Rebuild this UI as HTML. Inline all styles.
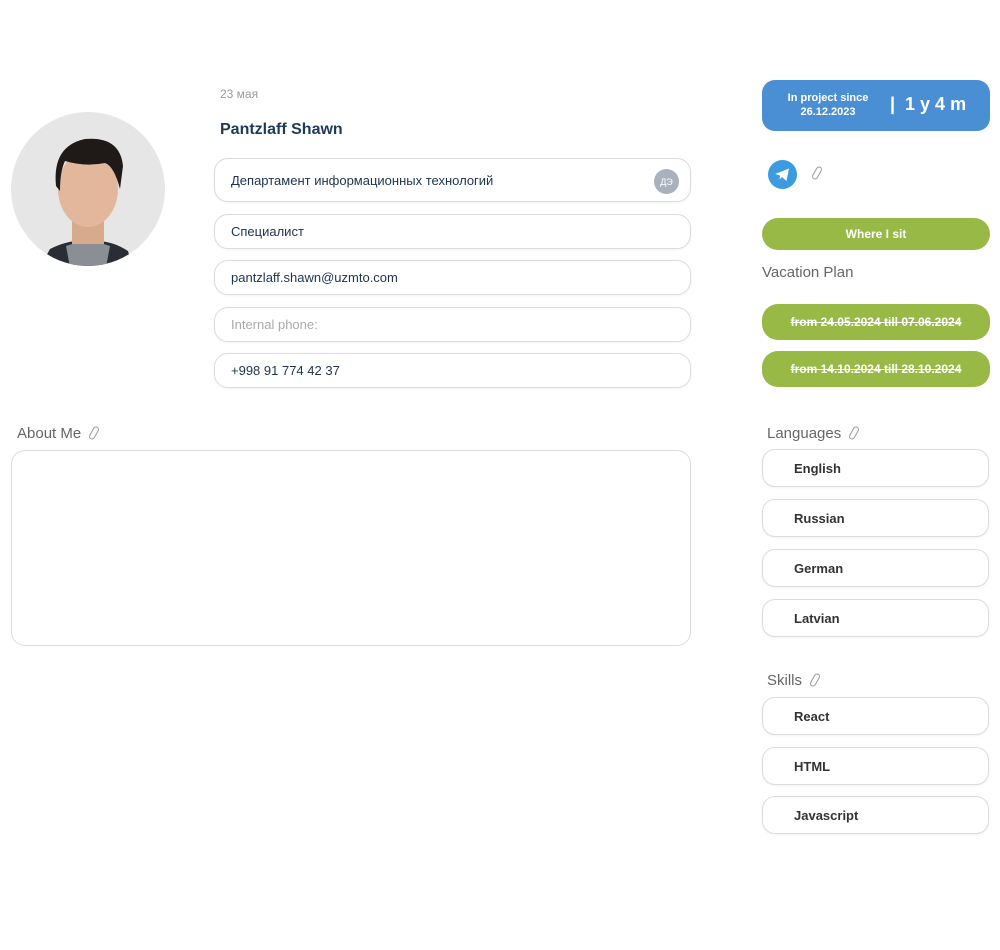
<!DOCTYPE html>
<html><head><meta charset="utf-8"><style>
*{box-sizing:border-box;margin:0;padding:0}
body{width:1000px;height:950px;background:#fff;position:relative;font-family:"Liberation Sans","Noto Sans CJK SC",sans-serif;overflow:hidden}
.a{position:absolute}
.f{position:absolute;left:214px;width:477px;border:1px solid #dcdcdc;border-radius:14px;font-size:13px;color:#1d3350;padding-left:16px;display:flex;align-items:center;box-shadow:0 1px 2px rgba(0,0,0,.05)}
.r{position:absolute;left:762px;width:227px;border:1px solid #dcdcdc;border-radius:13px;font-size:13px;font-weight:bold;color:#333;padding-left:31px;display:flex;align-items:center;height:38px;box-shadow:0 1px 2px rgba(0,0,0,.05)}
.g{position:absolute;left:762px;width:228px;background:#98b946;border-radius:16px;color:#fff;font-size:12px;font-weight:bold;display:flex;align-items:center;justify-content:center}
.lbl{position:absolute;font-size:15px;color:#666}
.pen{display:inline-block;width:6px;height:14px;border:1px solid #999;border-radius:3px;transform:rotate(30deg);margin-left:10px;vertical-align:-2px}
</style></head><body>
<svg class="a" style="left:10px;top:111px" width="156" height="156" viewBox="0 0 156 156">
<defs><clipPath id="c"><circle cx="78" cy="78" r="77"/></clipPath></defs>
<circle cx="78" cy="78" r="77" fill="#e6e6e6"/>
<g clip-path="url(#c)">
<path d="M30 156 L40 138 Q60 128 78 130 Q100 128 118 140 L122 156Z" fill="#2a2d33"/>
<path d="M56 135 L78 128 L100 135 L96 156 L60 156Z" fill="#8a8f96"/>
<rect x="62" y="105" width="32" height="28" fill="#d7a98d"/>
<ellipse cx="78" cy="78" rx="30" ry="38" fill="#e3b79c"/>
<path d="M46 75 Q42 35 75 28 Q110 25 113 55 L110 78 Q104 55 95 52 Q75 56 55 50 Q50 60 50 80Z" fill="#1f1a18"/>
</g></svg>
<div class="a" style="left:220px;top:87px;font-size:12px;color:#9a9a9a">23 мая</div>
<div class="a" style="left:220px;top:121px;font-size:16px;font-weight:bold;color:#1d3a5c">Pantzlaff Shawn</div>
<div class="f" style="top:158px;height:44px">Департамент информационных технологий<span class="a" style="right:11px;top:10px;width:25px;height:25px;border-radius:50%;background:#a9b1bd;color:#fff;font-size:9px;display:flex;align-items:center;justify-content:center">ДЭ</span></div>
<div class="f" style="top:214px;height:35px">Специалист</div>
<div class="f" style="top:260px;height:35px">pantzlaff.shawn@uzmto.com</div>
<div class="f" style="top:307px;height:35px;color:#aaa">Internal phone:</div>
<div class="f" style="top:353px;height:35px">+998 91 774 42 37</div>
<div class="lbl" style="left:17px;top:425px">About Me<span class="pen"></span></div>
<div class="a" style="left:11px;top:450px;width:680px;height:196px;border:1px solid #dcdcdc;border-radius:14px"></div>

<div class="a" style="left:762px;top:80px;width:228px;height:51px;background:#4a8fd3;border-radius:13px;color:#fff">
<div class="a" style="left:14px;top:11px;width:104px;text-align:center;font-size:11px;font-weight:bold;line-height:14px">In project since<br>26.12.2023</div>
<div class="a" style="left:128px;top:14px;font-size:18px;font-weight:bold">|&nbsp; 1 y 4 m</div>
</div>
<svg class="a" style="left:768px;top:160px" width="29" height="29" viewBox="0 0 29 29"><circle cx="14.5" cy="14.5" r="14.5" fill="#3a9be0"/><path d="M7 14 L21 8.5 L18.5 21 L14 17 L11.5 19.5 L12 15.5Z" fill="#fff"/></svg>
<span class="pen a" style="left:804px;top:166px"></span>
<div class="g" style="top:218px;height:32px">Where I sit</div>
<div class="lbl" style="left:762px;top:264px">Vacation Plan</div>
<div class="g" style="top:304px;height:36px;text-decoration:line-through">from 24.05.2024 till 07.06.2024</div>
<div class="g" style="top:351px;height:36px;text-decoration:line-through">from 14.10.2024 till 28.10.2024</div>
<div class="lbl" style="left:767px;top:425px">Languages<span class="pen"></span></div>
<div class="r" style="top:449px">English</div>
<div class="r" style="top:499px">Russian</div>
<div class="r" style="top:549px">German</div>
<div class="r" style="top:599px">Latvian</div>
<div class="lbl" style="left:767px;top:672px">Skills<span class="pen"></span></div>
<div class="r" style="top:697px">React</div>
<div class="r" style="top:747px">HTML</div>
<div class="r" style="top:796px">Javascript</div>
</body></html>
